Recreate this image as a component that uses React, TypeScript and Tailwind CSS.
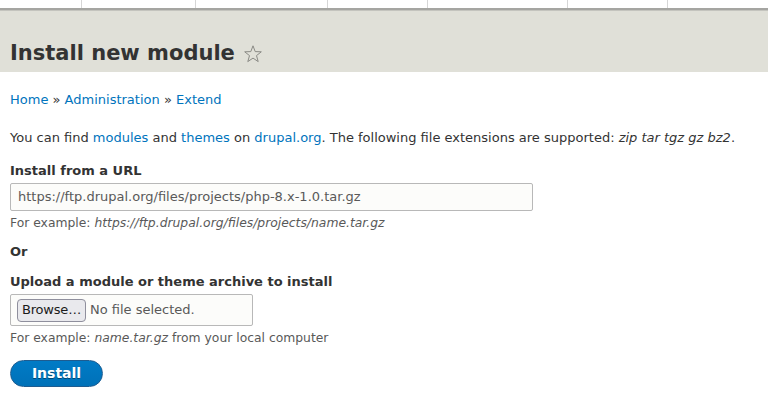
import React from 'react';

const tabWidths = [82, 114, 132, 100, 140, 100];

function StarIcon() {
  return (
    <svg width="20" height="20" viewBox="0 0 20 20" className="ml-[8px] mt-[2px]">
      <path
        d="M10 1.8 L12.2 7.6 L18.3 7.8 L13.5 11.6 L15.2 17.6 L10 14.1 L4.8 17.6 L6.5 11.6 L1.7 7.8 L7.8 7.6 Z"
        fill="none"
        stroke="#8a8a85"
        strokeWidth="1"
        strokeLinejoin="round"
      />
    </svg>
  );
}

export default function App() {
  return (
    <div className="w-[768px] h-[417px] overflow-hidden bg-white text-[#333] font-['DejaVu_Sans',sans-serif]">
      {/* toolbar remnant */}
      <div className="flex h-[8px] bg-white">
        {tabWidths.map((w, i) => (
          <div key={i} className="border-r border-[#d6d6d6]" style={{ width: w }} />
        ))}
      </div>
      <div className="h-[2px] bg-[#a5a5a1]" />
      <div className="h-[1px] bg-[#c4c4be]" />

      {/* page header */}
      <div className="bg-[#e0e0d8] h-[61px] px-[10px] flex items-end pb-[4px]">
        <h1 className="flex items-center text-[21px] font-bold leading-[30px] text-[#333]">
          Install new module
          <StarIcon />
        </h1>
      </div>

      <div className="px-[10px]">
        <nav className="mt-[19px] text-[13px] leading-[18px]">
          <a className="text-[#0074bd]">Home</a>
          <span className="text-[#333]"> » </span>
          <a className="text-[#0074bd]">Administration</a>
          <span className="text-[#333]"> » </span>
          <a className="text-[#0074bd]">Extend</a>
        </nav>

        <p className="mt-[20px] text-[13px] leading-[18px]">
          You can find <a className="text-[#0074bd]">modules</a> and{' '}
          <a className="text-[#0074bd]">themes</a> on <a className="text-[#0074bd]">drupal.org</a>. The following file
          extensions are supported: <em>zip tar tgz gz bz2</em>.
        </p>

        <div className="mt-[15px]">
          <label className="block text-[13px] font-bold leading-[18px]">Install from a URL</label>
          <div className="mt-[3px] w-[523px] h-[28px] border border-[#b8b8b8] rounded-[2px] bg-[#fcfcfa] flex items-center px-[7px] text-[13px] text-[#595959]">
            https://ftp.drupal.org/files/projects/php-8.x-1.0.tar.gz
          </div>
          <div className="mt-[3px] text-[12.35px] leading-[18px] text-[#595959]">
            For example: <em>https://ftp.drupal.org/files/projects/name.tar.gz</em>
          </div>
        </div>

        <div className="mt-[11px] text-[13px] font-bold leading-[18px]">Or</div>

        <div className="mt-[12px]">
          <label className="block text-[13px] font-bold leading-[18px]">Upload a module or theme archive to install</label>
          <div className="mt-[3px] w-[243px] h-[32px] border border-[#b8b8b8] rounded-[2px] bg-[#fcfcfa] flex items-center pl-[6px] text-[13px]">
            <span className="h-[23px] px-[4px] flex items-center border border-[#8f8f9d] rounded-[4px] bg-[#e9e9ed] text-[#1b1b1b] tracking-[-0.2px]">
              Browse…
            </span>
            <span className="ml-[4px] text-[#595959]">No file selected.</span>
          </div>
          <div className="mt-[3px] text-[12.35px] leading-[18px] text-[#595959]">
            For example: <em>name.tar.gz</em> from your local computer
          </div>
        </div>

        <button className="mt-[13px] w-[93px] h-[27px] rounded-full border border-[#1e5c90] bg-gradient-to-b from-[#007bc6] to-[#0071b8] text-white text-[14px] font-bold [text-shadow:0_1px_rgba(0,0,0,0.4)]">
          Install
        </button>
      </div>
    </div>
  );
}
